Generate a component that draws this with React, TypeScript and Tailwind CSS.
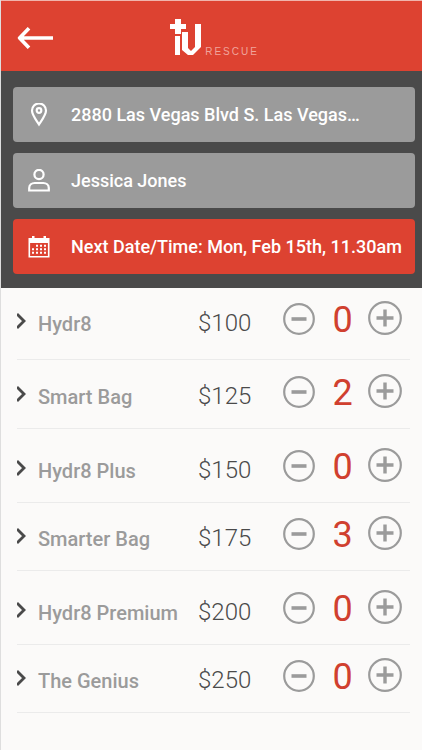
import { useState } from "react";
import type { ReactNode } from "react";

type Item = { name: string; price: number; quantity: number; spacing: string };

const initialItems: Item[] = [
  { name: "Hydr8", price: 100, quantity: 0, spacing: "pt-[13px] pb-6" },
  { name: "Smart Bag", price: 125, quantity: 2, spacing: "pt-[14px] pb-5" },
  { name: "Hydr8 Plus", price: 150, quantity: 0, spacing: "pt-[19px] pb-5" },
  { name: "Smarter Bag", price: 175, quantity: 3, spacing: "pt-[13px] pb-5" },
  { name: "Hydr8 Premium", price: 200, quantity: 0, spacing: "pt-[19px] pb-5" },
  { name: "The Genius", price: 250, quantity: 0, spacing: "pt-[13px] pb-5" },
];

function BackArrow() {
  return (
    <svg width="36" height="22" viewBox="0 0 36 22" fill="none" stroke="currentColor" strokeWidth="3.6" aria-hidden="true">
      <path d="M12 1.2 2.6 11 12 20.8M2.6 11H36" strokeLinejoin="round" />
    </svg>
  );
}

function Logo() {
  return (
    <svg width="31" height="37" viewBox="0 0 31 37" fill="currentColor" aria-hidden="true">
      <path d="M5 0h6v5h5v5h-5v5H5v-5H0V5h5z" />
      <path d="M5 17h5v19H5z" />
      <path d="M12 13h6v16l3 3 4-4V5h6v23l-8 8h-5l-6-5z" />
    </svg>
  );
}

function PinIcon() {
  return (
    <svg width="22" height="24" viewBox="0 0 22 24" fill="none" stroke="currentColor" strokeWidth="2.2" aria-hidden="true">
      <path d="M11 21.500C8.500 17.500 4 12 4 7.500a7 7 0 0 1 14 0C18 12 13.500 17.500 11 21.500z" />
      <circle cx="11" cy="7.500" r="2.300" />
    </svg>
  );
}

function PersonIcon() {
  return (
    <svg width="22" height="24" viewBox="0 0 22 24" fill="none" stroke="currentColor" strokeWidth="2.2" aria-hidden="true">
      <circle cx="11" cy="5.500" r="4.600" />
      <path d="M1.200 21.500v-2.500c0-3 2.500-5 5.500-5h8.600c3 0 5.500 2 5.500 5v2.500z" />
    </svg>
  );
}

function CalendarIcon() {
  return (
    <svg width="22" height="24" viewBox="0 0 22 24" fill="currentColor" aria-hidden="true">
      <path d="M.5 3H4V1h2.500v2h9V1H18v2h3.500v5H.5z" />
      <path d="M1.300 8v13.700h19.400V8" fill="none" stroke="currentColor" strokeWidth="1.600" />
      <path
        d="M8 10.700h10M4 14.200h14M4 17.700h14"
        fill="none"
        stroke="currentColor"
        strokeWidth="2"
        strokeDasharray="2 2"
      />
    </svg>
  );
}

function Chevron() {
  return (
    <svg width="9" height="16" viewBox="0 0 9 16" fill="none" stroke="#4a4a4a" strokeWidth="2.800" aria-hidden="true">
      <path d="M0 1l7 7-7 7" />
    </svg>
  );
}

function Field({ icon, color, children }: { icon: ReactNode; color: string; children: ReactNode }) {
  return (
    <button
      type="button"
      className={`flex h-[55px] w-full items-center gap-[21px] rounded-[4px] pl-[15px] text-left text-lg font-medium whitespace-nowrap text-white ${color}`}
    >
      {icon}
      <span>{children}</span>
    </button>
  );
}

function ItemRow({ item, onChange }: { item: Item; onChange: (quantity: number) => void }) {
  return (
    <li className={`flex items-end border-b border-[#ebebeb] pr-2 ${item.spacing}`}>
      <button
        type="button"
        className="flex flex-1 items-start gap-3 text-left text-xl leading-[22px] font-medium whitespace-nowrap text-[#9b9b9b]"
      >
        <Chevron />
        <span>{item.name}</span>
      </button>
      <span className="w-[85px] text-2xl leading-6 font-light text-[#4a4a4a]">${item.price}</span>
      <button
        type="button"
        aria-label={`Remove one ${item.name}`}
        onClick={() => onChange(Math.max(0, item.quantity - 1))}
      >
        <svg className="block" width="32" height="32" viewBox="0 0 32 32" fill="none" stroke="#9b9b9b" aria-hidden="true">
          <circle cx="16" cy="16" r="14.800" strokeWidth="2.200" />
          <path d="M8.500 16h15" strokeWidth="3.600" />
        </svg>
      </button>
      <output className="w-[53px] pl-[2px] text-center text-4xl leading-[30px] text-[#d0402f]">{item.quantity}</output>
      <button type="button" aria-label={`Add one ${item.name}`} onClick={() => onChange(item.quantity + 1)}>
        <svg className="block" width="34" height="34" viewBox="0 0 34 34" fill="none" stroke="#9b9b9b" aria-hidden="true">
          <circle cx="17" cy="17" r="15.800" strokeWidth="2.200" />
          <path d="M8.500 17h17M17 8.500v17" strokeWidth="3.400" />
        </svg>
      </button>
    </li>
  );
}

export default function App() {
  const [items, setItems] = useState(initialItems);

  const setQuantity = (index: number, quantity: number) =>
    setItems(items.map((item, i) => (i === index ? { ...item, quantity } : item)));

  return (
    <div className="min-h-screen border-l border-[#dedede] bg-[#fbfaf9] font-['Roboto',sans-serif]">
      <header className="grid h-[71px] grid-cols-[1fr_auto_1fr] items-center border-t border-[#f0b4ac] bg-[#dd4231] text-white">
        <button type="button" aria-label="Back" className="ml-4 justify-self-start pt-1">
          <BackArrow />
        </button>
        <div className="flex items-end gap-1 pt-[2px] pl-1.5">
          <Logo />
          <span className="font-['Liberation_Sans',sans-serif] text-[10px] leading-[8px] tracking-[2px] text-[#f0a59c]">
            RESCUE
          </span>
        </div>
      </header>
      <section className="flex flex-col gap-[11px] bg-[#4a4a4a] pt-4 pr-[7px] pb-[14px] pl-3">
        <Field icon={<PinIcon />} color="bg-[#9b9b9b]">
          2880 Las Vegas Blvd S. Las Vegas…
        </Field>
        <Field icon={<PersonIcon />} color="bg-[#9b9b9b]">
          Jessica Jones
        </Field>
        <Field icon={<CalendarIcon />} color="bg-[#dd4231]">
          Next Date/Time: Mon, Feb 15th, 11.30am
        </Field>
      </section>
      <ul className="mr-3 ml-4">
        {items.map((item, index) => (
          <ItemRow key={item.name} item={item} onChange={(quantity) => setQuantity(index, quantity)} />
        ))}
      </ul>
    </div>
  );
}
